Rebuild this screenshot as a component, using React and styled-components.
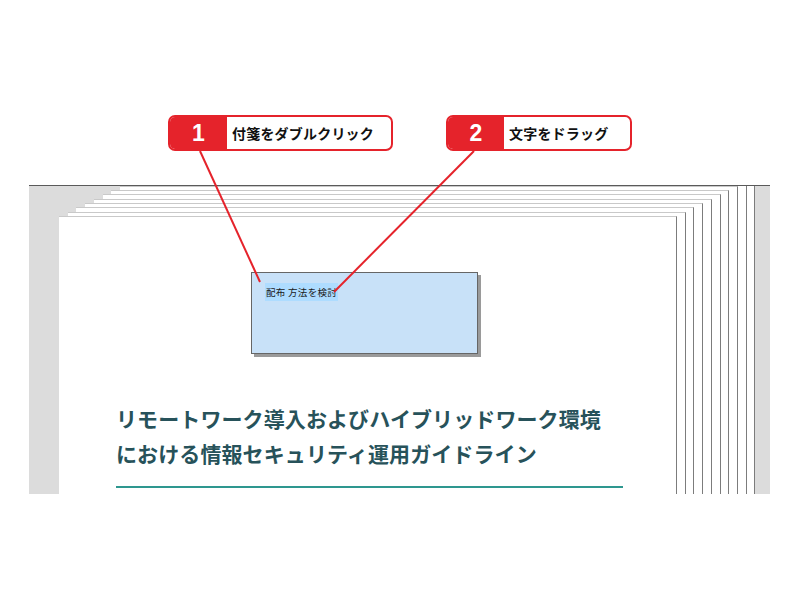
import React from 'react'
import styled, { createGlobalStyle } from 'styled-components';

const red = '#e5232b';
const jp = `"Noto Sans CJK JP", "Noto Sans", sans-serif`;

const GlobalStyle = createGlobalStyle`
  html, body {
    margin: 0;
    padding: 0;
    background: #ffffff;
  }
`;

const Screen = styled.div`
  position: relative;
  width: 800px;
  height: 600px;
  padding-top: 115px;
  box-sizing: border-box;
  overflow: hidden;
  font-family: ${jp};
`;

const CalloutRow = styled.div`
  display: flex;
  gap: 53px;
  padding-left: 168px;
  height: 36px;
`;

const Callout = styled.div`
  display: flex;
  width: ${({ w }) => w}px;
  height: 36px;
  box-sizing: border-box;
  border: 2px solid ${red};
  border-radius: 7px;
  overflow: hidden;
  background: #fff;
`;

const StepNo = styled.div`
  width: ${({ w }) => w}px;
  flex: none;
  display: flex;
  align-items: center;
  justify-content: center;
  background: ${red};
  color: #fff;
  font-family: "Liberation Sans Narrow", "Liberation Sans", sans-serif;
  font-weight: 700;
  font-size: 23px;
  padding-top: 1px;
`;

const StepText = styled.div`
  display: flex;
  align-items: center;
  padding-left: 5px;
  font-size: 14px;
  font-weight: 700;
  color: #111;
  letter-spacing: 0.2px;
`;

const Desk = styled.div`
  position: relative;
  margin: 34px 30px 0 29px;
  height: 308px;
  background: #dcdcdc;
  border-top: 1px solid #5a5a5a;
  overflow: hidden;
`;

// one loose sheet of the pile; the front one carries the content
const Sheet = styled.div`
  position: absolute;
  width: 618px;
  height: 420px;
  background: #fff;
  border-top: 1px solid #c9c9c9;
  border-right: 1px solid #7c7c7c;
  box-sizing: border-box;
`;

const FrontSheet = styled(Sheet)`
  padding: 55px 0 0 57px;
`;

const StickyRow = styled.div`
  padding-left: 135px;
`;

const Sticky = styled.div`
  width: 227px;
  height: 82px;
  box-sizing: border-box;
  background: #c8e1f8;
  border: 1px solid #666;
  box-shadow: 3px 3px 0 #9a9a9a;
  padding: 12px 0 0 13px;
  font-size: 10px;
  line-height: 14px;
`;

const Selected = styled.span`
  font-size: 9.5px;
  color: #1a1a1a;
  background: #aedcff;
  padding: 2px 1px;
  letter-spacing: 0.3px;
`;

const Title = styled.h1`
  margin: 47px 0 0;
  width: 507px;
  font-family: ${jp};
  font-size: 21px;
  font-weight: 700;
  line-height: 35px;
  letter-spacing: 0.1px;
  color: #27525a;
  padding-bottom: 15px;
  border-bottom: 2px solid #2e978f;
`;

const Leaders = styled.svg`
  position: absolute;
  left: 0;
  top: 0;
  pointer-events: none;
`;

const pile = Array.from({ length: 10 }, (_, i) => ({
  left: 30 + Math.round(8.7 * i),
  top: 30 - Math.round(4.35 * i),
})).reverse();

export default function App() {
  const back = pile.slice(0, -1);
  const front = pile[pile.length - 1];
  return (
    <>
      <GlobalStyle />
      <Screen>
        <CalloutRow>
          <Callout w={225}>
            <StepNo w={57}>1</StepNo>
            <StepText>付箋をダブルクリック</StepText>
          </Callout>
          <Callout w={186}>
            <StepNo w={56}>2</StepNo>
            <StepText>文字をドラッグ</StepText>
          </Callout>
        </CalloutRow>
        <Desk>
          {back.map((s, i) => (
            <Sheet key={i} style={{ left: s.left, top: s.top }} />
          ))}
          <FrontSheet style={{ left: front.left, top: front.top }}>
            <StickyRow>
              <Sticky>
                <Selected>配布 方法を検討</Selected>
              </Sticky>
            </StickyRow>
            <Title>
              リモートワーク導入およびハイブリッドワーク環境
              <br />
              における情報セキュリティ運用ガイドライン
            </Title>
          </FrontSheet>
        </Desk>
        <Leaders width="800" height="600">
          <line x1="200" y1="151" x2="260" y2="282" stroke={red} strokeWidth="2" />
          <line x1="474" y1="151" x2="334" y2="292" stroke={red} strokeWidth="2" />
        </Leaders>
      </Screen>
    </>
  );
}
